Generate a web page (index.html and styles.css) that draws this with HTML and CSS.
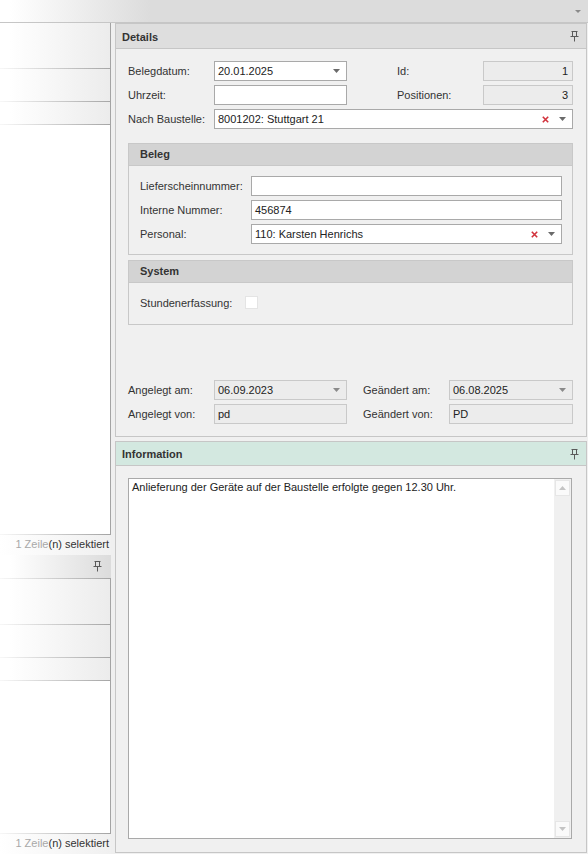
FILE: index.html
```html
<!DOCTYPE html>
<html lang="de">
<head>
    <meta charset="UTF-8">
    <meta name="viewport" content="width=device-width, initial-scale=1.0">
    <title>Lieferschein Details</title>
    <link rel="stylesheet" href="styles.css">
</head>
<body>
    <div class="topbar">
        <svg class="topbar-arrow" width="6" height="3" viewBox="0 0 6 3"><path d="M0 0h6L3 3z" fill="#8a8a8a"/></svg>
    </div>

    <div class="main">
        <!-- linke Listen -->
        <div class="left">
            <div class="grid-box grid-top">
                <div class="lrow lrow-1"></div>
                <div class="lrow lrow-2"></div>
                <div class="lrow lrow-3"></div>
            </div>
            <div class="status"><span class="faint">1 Zeile</span>(n) selektiert</div>
            <div class="lheader">
                <svg class="pin" width="9" height="11" viewBox="0 0 9 11"><path d="M1.5 0.5h6M2.5 0.5v5M6.5 0.5v5M0.5 5.5h8M4.5 5.5v5" stroke="#5a5a5a" fill="none"/></svg>
            </div>
            <div class="grid-box grid-bottom">
                <div class="lrow lrow-1"></div>
                <div class="lrow lrow-2"></div>
                <div class="lrow lrow-3"></div>
            </div>
            <div class="status"><span class="faint">1 Zeile</span>(n) selektiert</div>
        </div>

        <div class="splitter"></div>

        <div class="right">
            <section class="panel details">
                <div class="panel-header">
                    <span>Details</span>
                    <svg class="pin" width="9" height="11" viewBox="0 0 9 11"><path d="M1.5 0.5h6M2.5 0.5v5M6.5 0.5v5M0.5 5.5h8M4.5 5.5v5" stroke="#5a5a5a" fill="none"/></svg>
                </div>
                <div class="panel-body details-body">
                    <div class="form-top">
                        <label>Belegdatum:</label>
                        <div class="field combo">
                            <span class="value">20.01.2025</span>
                            <svg class="arrow" width="7" height="4" viewBox="0 0 7 4"><path d="M0 0h7L3.5 4z" fill="#6a6a6a"/></svg>
                        </div>
                        <span></span>
                        <label>Id:</label>
                        <div class="field readonly num">1</div>

                        <label>Uhrzeit:</label>
                        <div class="field"></div>
                        <span></span>
                        <label>Positionen:</label>
                        <div class="field readonly num">3</div>

                        <label>Nach Baustelle:</label>
                        <div class="field combo wide">
                            <span class="value">8001202: Stuttgart 21</span>
                            <svg class="clear" width="7" height="7" viewBox="0 0 7 7"><path d="M0.8 0.8l5.4 5.4M6.2 0.8l-5.4 5.4" stroke="#d2323c" stroke-width="1.6"/></svg>
                            <svg class="arrow" width="7" height="4" viewBox="0 0 7 4"><path d="M0 0h7L3.5 4z" fill="#6a6a6a"/></svg>
                        </div>
                    </div>

                    <div class="group">
                        <div class="group-header">Beleg</div>
                        <div class="group-body form-group-grid">
                            <label>Lieferscheinnummer:</label>
                            <div class="field"></div>
                            <label>Interne Nummer:</label>
                            <div class="field">456874</div>
                            <label>Personal:</label>
                            <div class="field combo">
                                <span class="value">110: Karsten Henrichs</span>
                                <svg class="clear" width="7" height="7" viewBox="0 0 7 7"><path d="M0.8 0.8l5.4 5.4M6.2 0.8l-5.4 5.4" stroke="#d2323c" stroke-width="1.6"/></svg>
                                <svg class="arrow" width="7" height="4" viewBox="0 0 7 4"><path d="M0 0h7L3.5 4z" fill="#6a6a6a"/></svg>
                            </div>
                        </div>
                    </div>

                    <div class="group system">
                        <div class="group-header">System</div>
                        <div class="group-body check-row">
                            <label>Stundenerfassung:</label>
                            <span class="checkbox"></span>
                        </div>
                    </div>

                    <div class="form-bottom">
                        <label>Angelegt am:</label>
                        <div class="field combo readonly">
                            <span class="value">06.09.2023</span>
                            <svg class="arrow" width="7" height="4" viewBox="0 0 7 4"><path d="M0 0h7L3.5 4z" fill="#8a8a8a"/></svg>
                        </div>
                        <span></span>
                        <label>Geändert am:</label>
                        <div class="field combo readonly">
                            <span class="value">06.08.2025</span>
                            <svg class="arrow" width="7" height="4" viewBox="0 0 7 4"><path d="M0 0h7L3.5 4z" fill="#8a8a8a"/></svg>
                        </div>

                        <label>Angelegt von:</label>
                        <div class="field readonly">pd</div>
                        <span></span>
                        <label>Geändert von:</label>
                        <div class="field readonly">PD</div>
                    </div>
                </div>
            </section>

            <section class="panel info">
                <div class="panel-header info-header">
                    <span>Information</span>
                    <svg class="pin" width="9" height="11" viewBox="0 0 9 11"><path d="M1.5 0.5h6M2.5 0.5v5M6.5 0.5v5M0.5 5.5h8M4.5 5.5v5" stroke="#5a5a5a" fill="none"/></svg>
                </div>
                <div class="panel-body info-body">
                    <div class="memo">
                        <div class="memo-text">Anlieferung der Geräte auf der Baustelle erfolgte gegen 12.30 Uhr.</div>
                        <div class="scrollbar">
                            <div class="scroll-btn">
                                <svg width="7" height="4" viewBox="0 0 7 4"><path d="M0 4h7L3.5 0z" fill="#c4c4c4"/></svg>
                            </div>
                            <div class="scroll-track"></div>
                            <div class="scroll-btn">
                                <svg width="7" height="4" viewBox="0 0 7 4"><path d="M0 0h7L3.5 4z" fill="#c4c4c4"/></svg>
                            </div>
                        </div>
                    </div>
                </div>
            </section>
        </div>
    </div>
</body>
</html>
```

FILE: styles.css
```css
* {
    box-sizing: border-box;
}
body {
    margin: 0;
    width: 588px;
    height: 854px;
    overflow: hidden;
    background: #f0f0f0;
    font-family: "Liberation Sans", Arial, sans-serif;
    font-size: 11px;
    color: #333;
}
.topbar {
    height: 23px;
    background: linear-gradient(to right, #fff 0, #fff 10px, #dcdcdc 150px);
    border-bottom: 1px solid #c6c6c6;
    display: flex;
    justify-content: flex-end;
    align-items: center;
    padding-right: 7px;
}
.main {
    display: flex;
    height: 831px;
}

/* linke Spalte */
.left {
    width: 111px;
    display: flex;
    flex-direction: column;
    background: #fff;
}
.grid-box {
    background: #fff;
    border-right: 1px solid #a3a3a3;
    border-bottom: 1px solid;
    border-image: linear-gradient(to right, #f8f8f8, #a3a3a3) 1;
}
.grid-top {
    height: 512px;
}
.grid-bottom {
    height: 255px;
}
.lrow {
    background: linear-gradient(to right, #fff 0, #fff 10px, #ececec 110px);
    border-bottom: 1px solid;
    border-image: linear-gradient(to right, #f8f8f8, #a5a5a5) 1;
}
.lrow-1 { height: 46px; }
.lrow-2 { height: 33px; }
.lrow-3 { height: 23px; }
.status {
    height: 20px;
    line-height: 18px;
    text-align: right;
    padding-right: 2px;
    background: linear-gradient(to right, #fff, #f0f0f0);
    color: #333;
    white-space: nowrap;
}
.faint {
    color: #a8a8a8;
}
.lheader {
    height: 24px;
    display: flex;
    justify-content: flex-end;
    align-items: center;
    padding-right: 9px;
    background: linear-gradient(to right, #fff 0, #fff 10px, #dcdcdc 110px);
    border-bottom: 1px solid;
    border-image: linear-gradient(to right, #f8f8f8, #a3a3a3) 1;
}
.splitter {
    width: 4px;
    background: #efefef;
}

/* rechte Spalte */
.right {
    width: 472px;
    display: flex;
    flex-direction: column;
    gap: 4px;
}
.panel {
    border: 1px solid #c6c6c6;
    background: #f0f0f0;
    display: flex;
    flex-direction: column;
}
.details {
    height: 414px;
}
.info {
    height: 412px;
}
.panel-header {
    height: 25px;
    display: flex;
    align-items: center;
    justify-content: space-between;
    padding: 1px 7px 0 6px;
    background: #dedede;
    border-bottom: 1px solid #c6c6c6;
    font-weight: bold;
    color: #333;
}
.info-header {
    height: 24px;
    background: #d3e8e0;
}
.panel-body {
    flex: 1;
    display: flex;
    flex-direction: column;
    padding: 12px 13px 12px 12px;
}
label {
    color: #333;
    white-space: nowrap;
}

.form-top, .form-bottom {
    display: grid;
    grid-template-columns: 86px 133px 50px 86px 1fr;
    grid-auto-rows: 20px;
    row-gap: 4px;
    align-items: center;
}
.form-bottom {
    grid-template-columns: 86px 133px 16px 86px 1fr;
    margin-top: auto;
}
.field {
    height: 20px;
    line-height: 18px;
    border: 1px solid #a9a9a9;
    background: #fff;
    padding: 0 3px;
    color: #222;
    white-space: nowrap;
    overflow: hidden;
}
.field.readonly {
    background: #ececec;
    border-color: #c9c9c9;
}
.field.num {
    text-align: right;
    padding-right: 4px;
}
.field.wide {
    grid-column: 2 / 6;
}
.combo {
    display: flex;
    align-items: center;
}
.combo .value {
    flex: 1;
}
.combo .clear {
    margin-right: 10px;
}
.combo .arrow {
    margin-right: 3px;
}

.group {
    margin-top: 14px;
    border: 1px solid #c8c8c8;
}
.group.system {
    margin-top: 5px;
}
.group-header {
    height: 22px;
    line-height: 21px;
    padding-left: 11px;
    background: #d3d3d3;
    border-bottom: 1px solid #c8c8c8;
    font-weight: bold;
    color: #333;
}
.group-body {
    padding: 10px 10px 10px 11px;
}
.form-group-grid {
    display: grid;
    grid-template-columns: 111px 1fr;
    grid-auto-rows: 20px;
    row-gap: 4px;
    align-items: center;
}
.check-row {
    display: flex;
    align-items: center;
    height: 41px;
    padding-top: 0;
    padding-bottom: 2px;
}
.check-row label {
    width: 105px;
}
.checkbox {
    width: 13px;
    height: 13px;
    background: #fff;
    border: 1px solid #e4e4e4;
}

.info-body {
    padding: 12px 14px 13px 12px;
}
.memo {
    flex: 1;
    display: flex;
    border: 1px solid #a9a9a9;
    background: #fff;
}
.memo-text {
    flex: 1;
    padding: 1px 3px;
    color: #222;
    line-height: 14px;
}
.scrollbar {
    width: 17px;
    display: flex;
    flex-direction: column;
    background: #f0f0f0;
    padding: 1px;
}
.scroll-btn {
    height: 16px;
    display: flex;
    align-items: center;
    justify-content: center;
    background: #fafafa;
    border: 1px solid #e6e6e6;
}
.scroll-track {
    flex: 1;
}
```
